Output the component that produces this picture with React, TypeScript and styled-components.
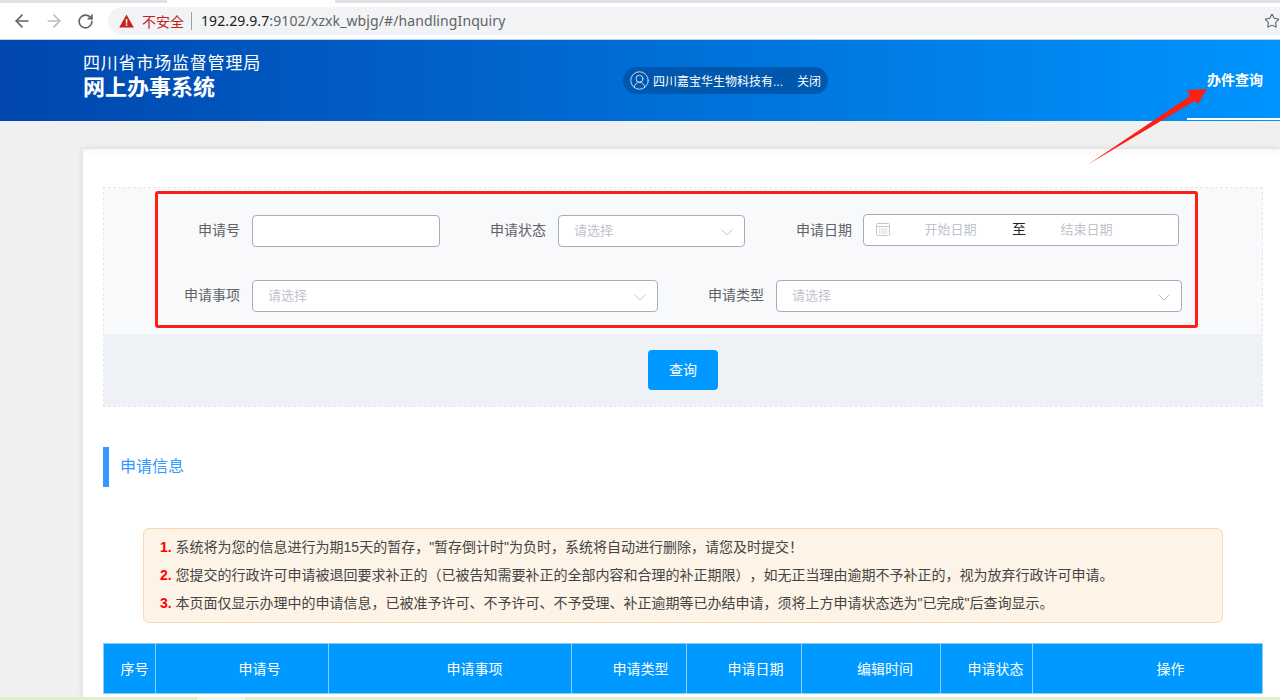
import React from 'react'
import styled, { createGlobalStyle } from 'styled-components'
import { ArrowLeft, ArrowRight, RotateCw, Star, CircleUserRound } from 'lucide-react'

const GlobalStyle = createGlobalStyle`
  html, body {
    margin: 0;
    height: 700px;
    overflow: hidden;
    background: #f0f0f0;
  }
  body {
    font-family: "Liberation Sans", "Noto Sans CJK SC", sans-serif;
  }
  * {
    box-sizing: border-box;
  }
`

const columns = [
  { title: '序号', width: 52 },
  { title: '申请号', width: 173 },
  { title: '申请事项', width: 243 },
  { title: '申请类型', width: 115 },
  { title: '申请日期', width: 115 },
  { title: '编辑时间', width: 139 },
  { title: '申请状态', width: 92 },
  { title: '操作', width: 230 },
]

const Chevron = () => (
  <ChevronIcon width="12" height="7" viewBox="0 0 12 7" fill="none">
    <path d="M0.5 0.5 L6 6 L11.5 0.5" stroke="#c0c4cc" strokeWidth="1" />
  </ChevronIcon>
)

const CalendarIcon = () => (
  <CalendarSvg width="14" height="14" viewBox="0 0 14 14" fill="none" stroke="#c4c8d0" strokeWidth="1">
    <rect x="0.5" y="1.5" width="13" height="12" rx="1" />
    <path d="M0.5 4.5 H13.5" />
    <path d="M4 0.5 V2 M10 0.5 V2" />
    <path d="M3 7 H11 M3 9 H11 M3 11 H11" strokeDasharray="1.4 0.8" />
  </CalendarSvg>
)

const App: React.FC = () => {
  return (
    <Root>
      <GlobalStyle />
      <TabStrip>
        <ActiveTab />
      </TabStrip>
      <Toolbar>
        <NavIcons>
          <ArrowLeft size={20} color="#5f6368" strokeWidth={2} />
          <ArrowRight size={20} color="#babcbe" strokeWidth={2} />
          <ReloadSlot>
            <RotateCw size={17} color="#5f6368" strokeWidth={2.4} />
          </ReloadSlot>
        </NavIcons>
        <Omnibox>
          <svg width="15" height="14" viewBox="0 0 15 14">
            <path d="M7.5 0.5 L14.8 13.5 H0.2 Z" fill="#c5221f" />
            <rect x="6.8" y="5" width="1.5" height="4.6" fill="#fff" />
            <rect x="6.8" y="10.4" width="1.5" height="1.5" fill="#fff" />
          </svg>
          <Insecure>不安全</Insecure>
          <OmniDivider />
          <Url>
            <UrlHost>192.29.9.7</UrlHost>:9102/xzxk_wbjg/#/handlingInquiry
          </Url>
          <StarSlot>
            <Star size={16} color="#5f6368" strokeWidth={1.6} />
          </StarSlot>
        </Omnibox>
      </Toolbar>

      <Header>
        <Brand>
          <BrandTop>四川省市场监督管理局</BrandTop>
          <BrandName>网上办事系统</BrandName>
        </Brand>
        <UserPill>
          <CircleUserRound size={21} color="#c9dcf2" strokeWidth={1.1} />
          <UserName>四川嘉宝华生物科技有...</UserName>
          <span>关闭</span>
        </UserPill>
        <NavItem>办件查询</NavItem>
      </Header>

      <Main>
        <Card>
          <SearchPanel>
            <FieldsArea>
              <FieldRow>
                <Label $width={136}>申请号</Label>
                <TextBox $width={188} />
                <Label $width={106}>申请状态</Label>
                <SelectBox $width={187}>
                  请选择
                  <Chevron />
                </SelectBox>
                <Label $width={107}>申请日期</Label>
                <DateRange>
                  <CalendarIcon />
                  <DateText>开始日期</DateText>
                  <DateSeparator>至</DateSeparator>
                  <DateText>结束日期</DateText>
                </DateRange>
              </FieldRow>
              <FieldRow>
                <Label $width={136}>申请事项</Label>
                <SelectBox $width={406}>
                  请选择
                  <Chevron />
                </SelectBox>
                <Label $width={106}>申请类型</Label>
                <SelectBox $width={406}>
                  请选择
                  <Chevron />
                </SelectBox>
              </FieldRow>
            </FieldsArea>
            <ActionArea>
              <SearchButton type="button">查询</SearchButton>
            </ActionArea>
          </SearchPanel>

          <SectionTitle>申请信息</SectionTitle>

          <Notice>
            <NoticeLine>
              <NoticeNumber>1.</NoticeNumber> 系统将为您的信息进行为期15天的暂存，"暂存倒计时"为负时，系统将自动进行删除，请您及时提交！
            </NoticeLine>
            <NoticeLine>
              <NoticeNumber>2.</NoticeNumber> 您提交的行政许可申请被退回要求补正的（已被告知需要补正的全部内容和合理的补正期限），如无正当理由逾期不予补正的，视为放弃行政许可申请。
            </NoticeLine>
            <NoticeLine>
              <NoticeNumber>3.</NoticeNumber> 本页面仅显示办理中的申请信息，已被准予许可、不予许可、不予受理、补正逾期等已办结申请，须将上方申请状态选为"已完成"后查询显示。
            </NoticeLine>
          </Notice>

          <Table>
            <thead>
              <tr>
                {columns.map((c) => (
                  <HeadCell key={c.title} $width={c.width}>
                    {c.title}
                  </HeadCell>
                ))}
              </tr>
            </thead>
          </Table>
        </Card>
      </Main>

      <DownloadBar>
        <DownloadHighlight />
      </DownloadBar>

      <RedFrame />
      <Arrow width="130" height="85" viewBox="0 0 130 85">
        <path d="M-2 81.5 L100 13 L97 7 L117 6 L108 21 L104.5 18 Z" fill="#fe1f14" />
      </Arrow>
    </Root>
  )
}

export default App

const Root = styled.div`
  position: relative;
  display: flex;
  flex-direction: column;
  width: 1280px;
  height: 700px;
  overflow: hidden;
  background: #f0f0f0;
`

const TabStrip = styled.div`
  flex: none;
  height: 3px;
  padding-left: 167px;
  background: #dee1e6;
`

const ActiveTab = styled.div`
  width: 168px;
  height: 3px;
  background: #fff;
`

const Toolbar = styled.div`
  flex: none;
  display: flex;
  height: 37px;
  padding-top: 4px;
  background: #fff;
  border-bottom: 1px solid #b9d5ee;
`

const NavIcons = styled.div`
  display: flex;
  align-items: center;
  gap: 12px;
  width: 108px;
  height: 28px;
  padding-left: 12px;
`

const ReloadSlot = styled.span`
  display: flex;
  margin-left: 1px;
`

const Omnibox = styled.div`
  flex: 1;
  display: flex;
  align-items: center;
  height: 28px;
  padding-left: 11px;
  border-radius: 14px 0 0 14px;
  background: #f1f3f4;
`

const Insecure = styled.span`
  margin-left: 8px;
  font-size: 14px;
  color: #c5221f;
`

const OmniDivider = styled.span`
  width: 1px;
  height: 18px;
  margin: 0 9px 0 7px;
  background: #9aa0a6;
`

const Url = styled.span`
  padding-bottom: 2px;
  font-family: "Noto Sans", sans-serif;
  font-size: 14px;
  letter-spacing: 0.1px;
  color: #5f6368;
`

const UrlHost = styled.span`
  color: #202124;
`

const StarSlot = styled.span`
  display: flex;
  margin-left: auto;
`

const Header = styled.header`
  flex: none;
  display: flex;
  align-items: center;
  height: 81px;
  padding-left: 83px;
  color: #fff;
  background: linear-gradient(90deg, #0046ad 0%, #0094fe 100%);
`

const Brand = styled.div`
  display: flex;
  flex-direction: column;
  width: 540px;
  margin-top: -6px;
`

const BrandTop = styled.div`
  font-size: 17px;
  line-height: 20px;
  letter-spacing: 0.8px;
`

const BrandName = styled.div`
  font-size: 22px;
  line-height: 28px;
  font-weight: 700;
`

const UserPill = styled.div`
  display: flex;
  align-items: center;
  width: 205px;
  height: 27px;
  padding-left: 6px;
  border-radius: 14px;
  font-size: 12px;
  background: #0058ae;
`

const UserName = styled.span`
  width: 144px;
  margin-left: 3px;
`

const NavItem = styled.div`
  align-self: flex-end;
  display: flex;
  justify-content: flex-end;
  width: 93px;
  height: 80px;
  margin-left: auto;
  margin-bottom: 1px;
  padding: 29px 17px 0 0;
  font-size: 14px;
  line-height: 22px;
  font-weight: 700;
  border-bottom: 2px solid #fff;
`

const Main = styled.main`
  flex: 1;
  min-height: 0;
  padding: 28px 0 0 83px;
`

const Card = styled.section`
  width: 1197px;
  height: 100%;
  padding: 38px 17px 0 20px;
  background: linear-gradient(180deg, #f8f8f8 0, #fff 8px);
  box-shadow: 0 0 6px rgba(0, 0, 0, 0.12);
`

const SearchPanel = styled.div`
  height: 220px;
  border: 1px dashed #e4e7ed;
`

const FieldsArea = styled.div`
  display: flex;
  flex-direction: column;
  gap: 33px;
  height: 146px;
  padding-top: 27px;
  background: #f8f9fb;
`

const FieldRow = styled.div`
  display: flex;
  align-items: flex-start;
  height: 32px;
`

const Label = styled.label<{ $width: number }>`
  flex: none;
  width: ${({ $width }) => $width}px;
  margin-right: 12px;
  font-size: 14px;
  line-height: 30px;
  text-align: right;
  color: #606266;
`

const TextBox = styled.div<{ $width: number }>`
  flex: none;
  width: ${({ $width }) => $width}px;
  height: 32px;
  border: 1px solid #a8adba;
  border-radius: 4px;
  background: #fff;
`

const SelectBox = styled(TextBox)`
  display: flex;
  align-items: center;
  justify-content: space-between;
  padding: 0 11px 4px 15px;
  font-size: 13px;
  color: #c0c4cc;
`

const ChevronIcon = styled.svg`
  margin-top: 6px;
`

const DateRange = styled.div`
  flex: none;
  display: flex;
  align-items: center;
  width: 316px;
  height: 32px;
  margin: -1px 0 0 -1px;
  padding: 0 0 4px 12px;
  border: 1px solid #a8adba;
  border-radius: 4px;
  background: #fff;
`

const CalendarSvg = styled.svg`
  margin-top: 2px;
`

const DateText = styled.span`
  width: 121px;
  font-size: 13px;
  text-align: center;
  color: #c0c4cc;
`

const DateSeparator = styled.span`
  width: 14px;
  margin-left: 1px;
  font-size: 14px;
  color: #222;
`

const ActionArea = styled.div`
  display: flex;
  justify-content: center;
  height: 72px;
  padding-top: 16px;
  background: #eef1f5;
`

const SearchButton = styled.button`
  width: 70px;
  height: 40px;
  padding: 0 0 2px;
  border: none;
  border-radius: 4px;
  font-family: inherit;
  font-size: 14px;
  color: #fff;
  background: #0099ff;
`

const SectionTitle = styled.h2`
  height: 40px;
  margin: 40px 0 0;
  padding-left: 11px;
  border-left: 6px solid #3399ff;
  font-size: 16px;
  font-weight: 400;
  line-height: 39px;
  color: #3399ff;
`

const Notice = styled.div`
  height: 95px;
  margin: 41px 40px 0;
  padding: 4px 16px 0;
  border: 1px solid #fbd8b4;
  border-radius: 6px;
  background: #fdf3e7;
`

const NoticeLine = styled.p`
  margin: 0;
  font-size: 14px;
  line-height: 28px;
  white-space: nowrap;
  text-spacing-trim: space-all;
  color: #444;
`

const NoticeNumber = styled.b`
  color: #f00;
`

const Table = styled.table`
  width: 1159px;
  margin-top: 20px;
  table-layout: fixed;
  border-collapse: collapse;
`

const HeadCell = styled.th<{ $width: number }>`
  width: ${({ $width }) => $width}px;
  height: 50px;
  padding: 0 0 2px ${({ $width }) => Math.round($width * 0.2)}px;
  border: 1px solid #94cbf2;
  font-size: 14px;
  font-weight: 400;
  color: #fff;
  background: #0099ff;
`

const DownloadBar = styled.div`
  flex: none;
  height: 3px;
  padding-left: 197px;
  background: #e2edcd;
`

const DownloadHighlight = styled.div`
  width: 48px;
  height: 3px;
  background: #f3f7e9;
`

const RedFrame = styled.div`
  position: absolute;
  left: 155px;
  top: 191px;
  width: 1043px;
  height: 137px;
  border: 3px solid #fe1f14;
  border-radius: 3px;
  pointer-events: none;
`

const Arrow = styled.svg`
  position: absolute;
  left: 1090px;
  top: 83px;
  overflow: visible;
  pointer-events: none;
`
